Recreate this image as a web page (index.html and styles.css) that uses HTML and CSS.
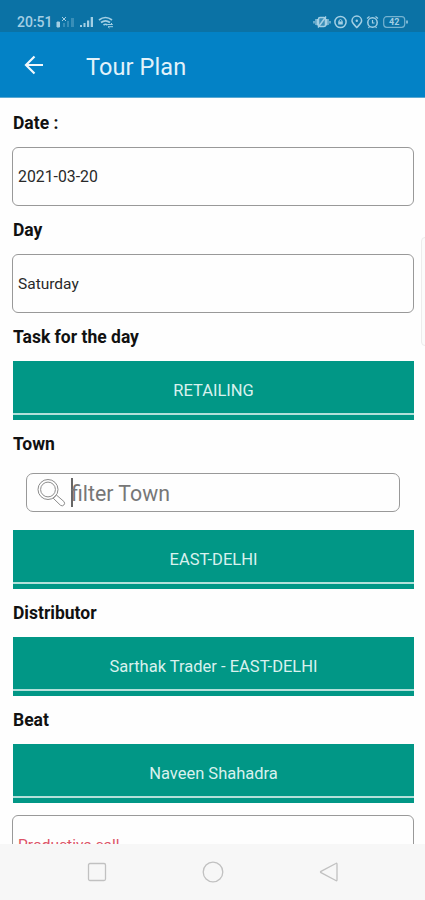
FILE: index.html
```
<!DOCTYPE html>
<html lang="en">
<head>
<meta charset="utf-8">
<title>Tour Plan</title>
<link rel="stylesheet" href="styles.css">
</head>
<body>
<div class="screen">
  <div class="status">
    <span class="time">20:51</span>
    <svg class="status-left" width="58" height="16" viewBox="0 0 58 16" fill="#a3cfe4">
      <path d="M1 8h2.500v5H1zM6 3l4 4m0-4-4 4" stroke="#a3cfe4" stroke-width="1"/>
      <path d="M7 9h2v4H7zM11 7h2v6h-2zM15 4h3v9h-3z" opacity=".3"/>
      <path d="M24 11h2v2h-2zM27.500 9h2v4h-2zM31 6.500h2.200V13H31zM34.700 3h2.300v10h-2.300z"/>
      <path d="M43 6q6.500-5 13 0M45 8.500q4.500-3.400 9 0M47.500 11q2-1.500 4 0" fill="none" stroke="#a3cfe4" stroke-width="1.700"/>
      <path d="M51.500 10.500h5m-1.500-1.500 1.500 1.500M57 12.700h-5m1.500 1.300-1.500-1.300" fill="none" stroke="#a3cfe4" stroke-width="1"/>
    </svg>
    <svg class="status-right" width="96" height="16" viewBox="0 0 96 16" fill="none" stroke="#a3cfe4" stroke-width="1.500">
      <path d="M1 7v2.500M17 7v2.500M3 5v6M15 5v6" opacity=".8"/>
      <rect x="5.500" y="3.500" width="7" height="9" rx="1.500" fill="#a3cfe4" fill-opacity=".3"/><path d="M5 13.500 13 2.500M4.500 5v6.500M13.500 5v6.500"/>
      <circle cx="27.500" cy="8" r="5.600"/><rect x="25.200" y="7.500" width="4.600" height="3" fill="#a3cfe4" stroke="none"/><path d="M26 8V6.500q1.500-2 3 0V8" stroke-width="1"/>
      <path d="M43.800 13.500C41 10.500 39 9 39 6.800a4.800 4.800 0 0 1 9.600 0c0 2.200-2 3.700-4.800 6.700z"/><circle cx="43.800" cy="6.800" r="1.200" fill="#a3cfe4" stroke="none"/>
      <circle cx="59.500" cy="8.500" r="4.700"/><path d="M54 4.500 56.500 2.500M65 4.500 62.500 2.500M59.500 6v3h2M56.500 12.500l-1 1.500M62.500 12.500l1 1.500" stroke-width="1.200"/>
      <rect x="70.700" y="2.700" width="21" height="10.600" rx="3" stroke-width="1.200" opacity=".7"/><path d="M94 6.500v3" stroke-width="1.500"/>
      <text x="81.200" y="11.300" class="battery">42</text>
    </svg>
  </div>
  <header class="appbar">
    <svg class="back" width="20" height="20" viewBox="0 0 20 20" fill="none" stroke="#f0f8fc" stroke-width="2.200"><path d="M19 10H2.500M10.500 1.500 2 10l8.500 8.500"/></svg>
    <h1 class="title">Tour Plan</h1>
  </header>
  <main class="content">
    <div class="label">Date :</div>
    <div class="field date">2021-03-20</div>
    <div class="label">Day</div>
    <div class="field">Saturday</div>
    <div class="label">Task for the day</div>
    <div class="button"><span>RETAILING</span></div>
    <div class="label">Town</div>
    <div class="search">
      <svg width="30" height="30" viewBox="0 0 30 30" fill="none" stroke="#8c8c8c" stroke-width="1"><circle cx="12" cy="11.500" r="10"/><circle cx="12" cy="11.500" r="7.400"/><path d="m17.200 20.200 3.200-3.200 7.500 6.500q1.500 1.800 0 3.500t-3.500.2z"/></svg>
      <i class="caret"></i><span>filter Town</span>
    </div>
    <div class="button"><span>EAST-DELHI</span></div>
    <div class="label">Distributor</div>
    <div class="button"><span>Sarthak Trader - EAST-DELHI</span></div>
    <div class="label">Beat</div>
    <div class="button"><span>Naveen Shahadra</span></div>
    <div class="field last">Productive call</div>
  </main>
  <nav class="navbar">
    <svg width="22" height="22" viewBox="0 0 22 22"><rect x="2.500" y="2.500" width="17" height="17" rx="1.500"/></svg>
    <svg width="22" height="22" viewBox="0 0 22 22"><circle cx="11" cy="11" r="9.800"/></svg>
    <svg width="22" height="22" viewBox="0 0 22 22"><path d="M17.800 2.500q1.200-.7 1.200.7v15.600q0 1.400-1.200.7L3 11.700q-1-.7 0-1.400z"/></svg>
  </nav>
  <div class="edge-handle"></div>
</div>
</body>
</html>
```
FILE: styles.css
```
* { box-sizing: border-box; }
body { margin: 0; font-family: Roboto, sans-serif; background: #fefefe; }
.screen {
  position: relative;
  width: 425px;
  height: 900px;
  overflow: hidden;
  display: flex;
  flex-direction: column;
}
.status {
  flex: none;
  height: 32px;
  padding: 12px 16px 0 17px;
  display: flex;
  align-items: center;
  background: #0b72a5;
  color: #a3cfe4;
}
.time { width: 39px; font-size: 14px; font-weight: 500; line-height: 16px; }
.status-right { margin-left: auto; }
.status svg { display: block; }
.battery { font-size: 9px; font-weight: 700; text-anchor: middle; fill: #a3cfe4; stroke: none; }
.appbar {
  flex: none;
  height: 66px;
  padding-left: 24px;
  display: flex;
  align-items: center;
  background: #0382c6;
  border-bottom: 1px solid #5aa9d2;
}
.title {
  margin: 4px 0 0 42px;
  font-size: 23.5px;
  line-height: 30px;
  font-weight: 400;
  letter-spacing: .1px;
  color: #e2f2fa;
}
.content { flex: 1; min-height: 0; overflow: hidden; padding: .5px 11px 0 12px; }
.label {
  height: 48px;
  padding-left: 1px;
  line-height: 48px;
  font-size: 17.5px;
  font-weight: 700;
  color: #111;
}
.field {
  height: 59.200px;
  padding-left: 5px;
  border: 1.500px solid #999;
  border-radius: 6px;
  line-height: 58px;
  font-size: 15.5px;
  color: #292929;
}
.date { font-size: 15.8px; }
.button {
  height: 59.200px;
  margin-left: 1px;
  border-bottom: 5px solid #019786;
  background: #b3e0da;
  text-align: center;
  color: #d9f1ee;
  font-size: 16.5px;
}
.button span { display: block; height: 52px; line-height: 59px; background: #019786; }
.search {
  display: flex;
  align-items: center;
  height: 39px;
  margin: 5px 14px 17.500px;
  padding-left: 9px;
  border: 1.500px solid #999;
  border-radius: 7px;
  color: #777;
  font-size: 21.3px;
}
.search span { padding-top: 1px; }
.caret { width: 2px; height: 29px; margin: 0 -2px 0 5px; background: #666; }
.last { margin-top: 11.500px; color: #dc5367; }
.navbar {
  flex: none;
  height: 56px;
  padding: 0 85px 0 86px;
  display: flex;
  align-items: center;
  justify-content: space-between;
  background: #f7f7f7;
}
.navbar svg { fill: none; stroke: #c1c1c1; stroke-width: 1.300; }
.edge-handle {
  position: absolute;
  right: -6px;
  top: 237px;
  width: 10px;
  height: 109px;
  border: 1px solid #ececec;
  border-radius: 4px;
  background: #fbfbfb;
}
```
